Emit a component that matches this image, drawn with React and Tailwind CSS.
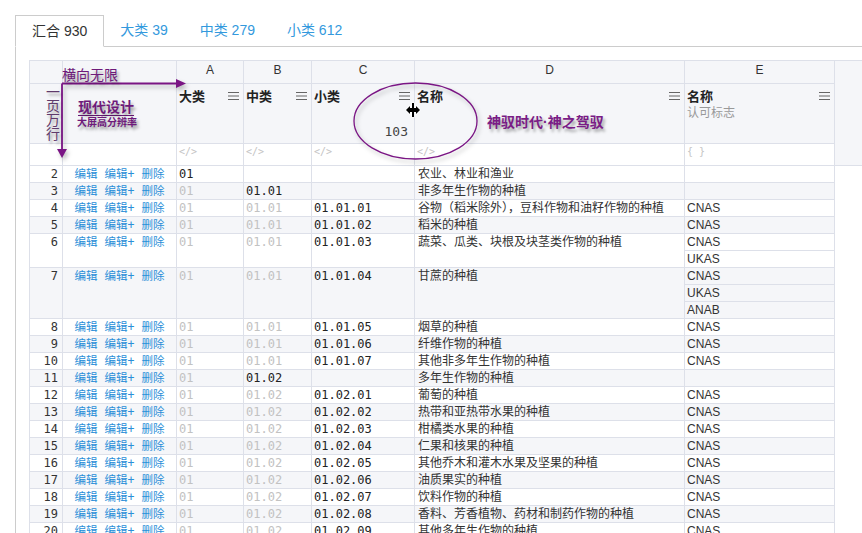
import React from 'react';

// 分类汇总表：顶部标签 + 表格 + 紫色标注
const TABS = [
  { label: '汇合 930', active: true },
  { label: '大类 39' },
  { label: '中类 279' },
  { label: '小类 612' },
];

const ROWS = [
  { n: 2, a: '01', b: '', c: '', d: '农业、林业和渔业', e: [] },
  { n: 3, a: '01', aDim: true, b: '01.01', c: '', d: '非多年生作物的种植', e: [] },
  { n: 4, a: '01', aDim: true, b: '01.01', bDim: true, c: '01.01.01', d: '谷物（稻米除外），豆科作物和油籽作物的种植', e: ['CNAS'] },
  { n: 5, a: '01', aDim: true, b: '01.01', bDim: true, c: '01.01.02', d: '稻米的种植', e: ['CNAS'] },
  { n: 6, a: '01', aDim: true, b: '01.01', bDim: true, c: '01.01.03', d: '蔬菜、瓜类、块根及块茎类作物的种植', e: ['CNAS', 'UKAS'] },
  { n: 7, a: '01', aDim: true, b: '01.01', bDim: true, c: '01.01.04', d: '甘蔗的种植', e: ['CNAS', 'UKAS', 'ANAB'] },
  { n: 8, a: '01', aDim: true, b: '01.01', bDim: true, c: '01.01.05', d: '烟草的种植', e: ['CNAS'] },
  { n: 9, a: '01', aDim: true, b: '01.01', bDim: true, c: '01.01.06', d: '纤维作物的种植', e: ['CNAS'] },
  { n: 10, a: '01', aDim: true, b: '01.01', bDim: true, c: '01.01.07', d: '其他非多年生作物的种植', e: ['CNAS'] },
  { n: 11, a: '01', aDim: true, b: '01.02', c: '', d: '多年生作物的种植', e: [] },
  { n: 12, a: '01', aDim: true, b: '01.02', bDim: true, c: '01.02.01', d: '葡萄的种植', e: ['CNAS'] },
  { n: 13, a: '01', aDim: true, b: '01.02', bDim: true, c: '01.02.02', d: '热带和亚热带水果的种植', e: ['CNAS'] },
  { n: 14, a: '01', aDim: true, b: '01.02', bDim: true, c: '01.02.03', d: '柑橘类水果的种植', e: ['CNAS'] },
  { n: 15, a: '01', aDim: true, b: '01.02', bDim: true, c: '01.02.04', d: '仁果和核果的种植', e: ['CNAS'] },
  { n: 16, a: '01', aDim: true, b: '01.02', bDim: true, c: '01.02.05', d: '其他乔木和灌木水果及坚果的种植', e: ['CNAS'] },
  { n: 17, a: '01', aDim: true, b: '01.02', bDim: true, c: '01.02.06', d: '油质果实的种植', e: ['CNAS'] },
  { n: 18, a: '01', aDim: true, b: '01.02', bDim: true, c: '01.02.07', d: '饮料作物的种植', e: ['CNAS'] },
  { n: 19, a: '01', aDim: true, b: '01.02', bDim: true, c: '01.02.08', d: '香料、芳香植物、药材和制药作物的种植', e: ['CNAS'] },
  { n: 20, a: '01', aDim: true, b: '01.02', bDim: true, c: '01.02.09', d: '其他多年生作物的种植', e: ['CNAS'] },
];

const MONO = "font-['DejaVu_Sans_Mono','Noto_Sans_CJK_SC',monospace]";
const CELL = 'border border-[#dde0e9] p-0 align-top';

function MenuIcon() {
  return (
    <svg width="11" height="8" viewBox="0 0 11 8" className="mt-[4px] shrink-0">
      <path d="M0 0.5H11M0 4H11M0 7.5H11" stroke="#666" strokeWidth="1" />
    </svg>
  );
}

function HeadCell({ label, sub, children }) {
  return (
    <td className={`${CELL} bg-[#f5f6f9]`}>
      <div className="flex h-[59px] flex-col">
        <div className="flex items-start justify-between pl-[2px] pr-[4px] pt-[4px]">
          <div>
            <div className="text-[13px] font-bold leading-[17px] text-[#222]">{label}</div>
            {sub && <div className="text-[12px] leading-[17px] text-[#999]">{sub}</div>}
          </div>
          <MenuIcon />
        </div>
        {children}
      </div>
    </td>
  );
}

function DataRows() {
  const out = [];
  ROWS.forEach((r, i) => {
    const bg = i % 2 === 1 ? 'bg-[#f5f6f9]' : 'bg-white';
    const span = Math.max(1, r.e.length);
    out.push(
      <tr key={r.n} className={`h-[17px] ${bg}`}>
        <td rowSpan={span} className={`${CELL} ${MONO} pr-[4px] text-right text-[12px] leading-[16px] text-[#333]`}>{r.n}</td>
        <td rowSpan={span} className={`${CELL} ${MONO} text-center text-[11.5px] leading-[16px] text-[#2b8fd8]`}>编辑 编辑+ 删除</td>
        <td rowSpan={span} className={`${CELL} ${MONO} pl-[2px] text-[12px] leading-[16px] ${r.aDim ? 'text-[#c2c2c2]' : 'text-[#222]'}`}>{r.a}</td>
        <td rowSpan={span} className={`${CELL} ${MONO} pl-[2px] text-[12px] leading-[16px] ${r.bDim ? 'text-[#c2c2c2]' : 'text-[#222]'}`}>{r.b}</td>
        <td rowSpan={span} className={`${CELL} ${MONO} pl-[2px] text-[12px] leading-[16px] text-[#222]`}>{r.c}</td>
        <td rowSpan={span} className={`${CELL} pl-[3px] text-[12px] leading-[16px] text-[#333]`}>{r.d}</td>
        <td className={`${CELL} pl-[2px] text-[12px] leading-[16px] text-[#333]`}>{r.e[0] || ''}</td>
      </tr>
    );
    r.e.slice(1).forEach((v, j) => {
      out.push(
        <tr key={`${r.n}-${j}`} className={`h-[17px] ${bg}`}>
          <td className={`${CELL} pl-[2px] text-[12px] leading-[16px] text-[#333]`}>{v}</td>
        </tr>
      );
    });
  });
  return out;
}

function Annotations() {
  const shadow = '[text-shadow:2px_3px_3px_rgba(0,0,0,0.35)]';
  return (
    <>
      <svg
        width="862"
        height="533"
        className="pointer-events-none absolute left-0 top-0 [filter:drop-shadow(2px_3px_2px_rgba(0,0,0,0.25))]"
      >
        <path d="M62 83.5H178M62 83.5V150" stroke="#7a1584" strokeWidth="1.8" fill="none" />
        <path d="M176 79L186 83.5L176 88Z" fill="#7a1584" />
        <path d="M57 149L62 158L67 149Z" fill="#7a1584" />
        <ellipse cx="415.5" cy="121" rx="61.5" ry="38" stroke="#7a1584" strokeWidth="1.3" fill="none" />
      </svg>

      <div className={`absolute left-[62px] top-[67px] text-[14px] leading-[16px] text-[#6e1a7a] ${shadow}`}>横向无限</div>

      <div className={`absolute left-[46px] top-[85px] flex flex-col text-[14px] leading-[14px] text-[#5f3a6b] ${shadow}`}>
        <span>一</span>
        <span>页</span>
        <span>万</span>
        <span>行</span>
      </div>

      <div className={`absolute left-[78px] top-[99px] border-b border-[#6e1a7a] text-[14px] font-bold leading-[16px] text-[#6e1a7a] ${shadow}`}>现代设计</div>
      <div className={`absolute left-[77px] top-[117px] text-[10px] font-bold leading-[12px] text-[#6e1a7a] ${shadow}`}>大屏高分辨率</div>

      <div className={`absolute left-[487px] top-[114px] text-[14px] font-bold leading-[16px] text-[#7a1c86] ${shadow}`}>神驭时代·神之驾驭</div>

      {/* 列宽拖拽光标 */}
      <svg width="16" height="16" viewBox="0 0 16 16" className="absolute left-[405px] top-[102px]">
        <path
          d="M7 1h2v5h2V4l4 4-4 4v-2H9v5H7v-5H5v2L1 8l4-4v2h2z"
          fill="#000"
          stroke="#fff"
          strokeWidth="1.2"
          paintOrder="stroke"
        />
      </svg>
    </>
  );
}

export default function App() {
  return (
    <div className="relative h-[533px] w-[862px] overflow-hidden bg-white font-['Liberation_Sans','Noto_Sans_CJK_SC',sans-serif] text-[#333]">
      <div className="pl-[15px] pt-[15px]">
        {/* 标签栏 */}
        <div className="flex border-b border-[#ccc]">
          {TABS.map((t) =>
            t.active ? (
              <div
                key={t.label}
                className="-mb-px h-[32px] border border-[#ccc] border-b-white bg-white px-[16px] text-[14px] leading-[30px] text-[#333]"
              >
                {t.label}
              </div>
            ) : (
              <div key={t.label} className="h-[31px] px-[16px] text-[14px] leading-[31px] text-[#3399dd]">
                {t.label}
              </div>
            )
          )}
        </div>

        {/* 表格 */}
        <div className="border-l border-[#ccc] pl-[13px] pt-[13px]">
          <table className="w-[845px] table-fixed border-collapse">
            <colgroup>
              <col className="w-[33px]" />
              <col className="w-[114px]" />
              <col className="w-[67px]" />
              <col className="w-[68px]" />
              <col className="w-[103px]" />
              <col className="w-[270px]" />
              <col className="w-[150px]" />
              <col className="w-[40px]" />
            </colgroup>
            <thead>
              <tr className="h-[23px] bg-[#f5f6f9] text-center text-[12px] text-[#333]">
                <td className={CELL}></td>
                <td className={CELL}></td>
                <td className={`${CELL} align-middle`}>A</td>
                <td className={`${CELL} align-middle`}>B</td>
                <td className={`${CELL} align-middle`}>C</td>
                <td className={`${CELL} align-middle`}>D</td>
                <td className={`${CELL} align-middle`}>E</td>
                <td rowSpan={3} className={`${CELL} bg-[#f5f6f9]`}></td>
              </tr>
              <tr className="h-[60px] bg-[#f5f6f9]">
                <td className={CELL}></td>
                <td className={CELL}></td>
                <HeadCell label="大类" />
                <HeadCell label="中类" />
                <HeadCell label="小类">
                  <div className={`mt-auto self-end pb-[3px] pr-[6px] text-[13px] leading-[16px] text-[#444] ${MONO}`}>103</div>
                </HeadCell>
                <HeadCell label="名称" />
                <HeadCell label="名称" sub="认可标志" />
              </tr>
              <tr className="h-[22px] bg-white">
                <td className={CELL}></td>
                <td className={CELL}></td>
                {['</>', '</>', '</>', '</>', '{ }'].map((s, i) => (
                  <td key={i} className={`${CELL} pl-[2px] align-middle text-[10px] text-[#c4c4c4] ${MONO}`}>{s}</td>
                ))}
              </tr>
            </thead>
            <tbody>
              <DataRows />
            </tbody>
          </table>
        </div>
      </div>
      <Annotations />
    </div>
  );
}
